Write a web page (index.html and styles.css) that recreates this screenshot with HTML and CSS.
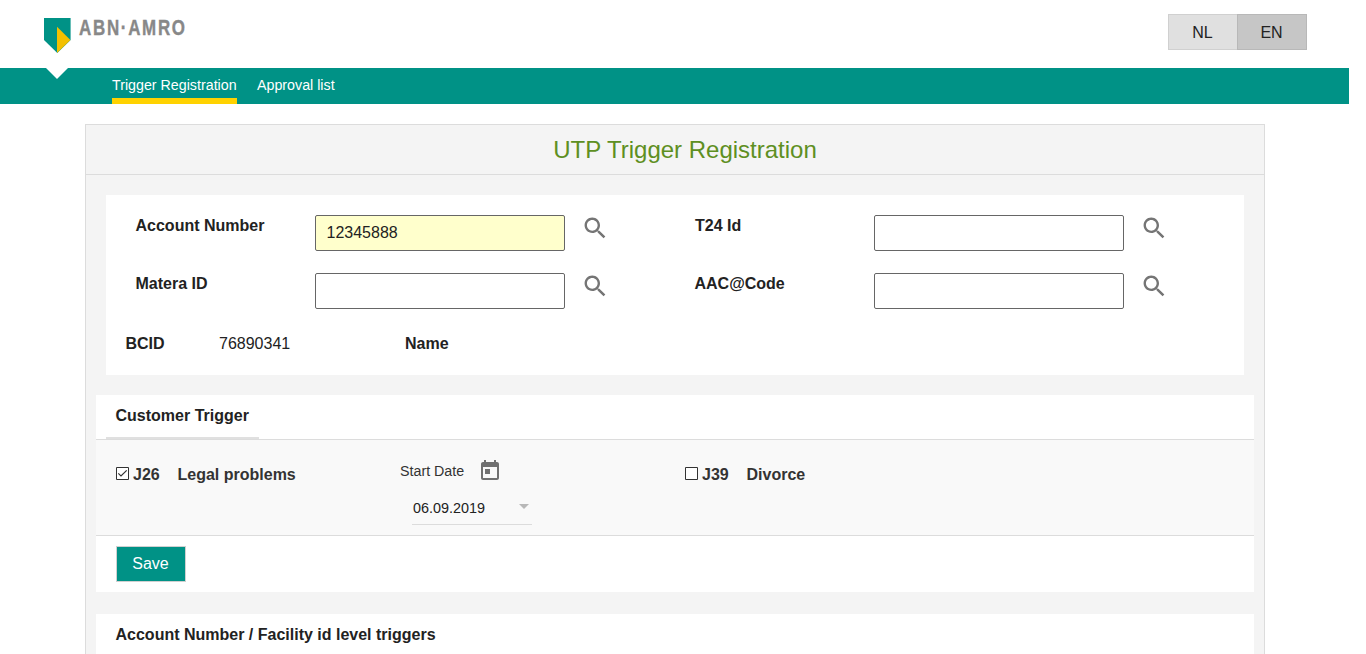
FILE: index.html
```html
<!DOCTYPE html>
<html lang="en">
<head>
<meta charset="utf-8">
<title>UTP Trigger Registration</title>
<link rel="stylesheet" href="styles.css">
</head>
<body>
<svg class="defs" width="0" height="0" aria-hidden="true">
  <symbol id="search" viewBox="0 0 24 24"><path d="M15.5 14h-.79l-.28-.27C15.41 12.59 16 11.11 16 9.5 16 5.91 13.09 3 9.5 3S3 5.91 3 9.5 5.91 16 9.5 16c1.61 0 3.09-.59 4.23-1.57l.27.28v.79l5 4.99L20.49 19l-4.99-5zm-6 0C7.01 14 5 11.99 5 9.5S7.01 5 9.5 5 14 7.01 14 9.5 11.99 14 9.5 14z"/></symbol>
</svg>
<div class="page">
  <header class="top">
    <svg class="logo" width="160" height="40" viewBox="0 0 160 40" role="img" aria-label="ABN AMRO">
      <path fill="#009286" d="M0 0h26.600v22L13.300 35 0 22z"/>
      <path fill="#f3c000" d="M13 8.800L26.400 22 13 35z"/>
      <text class="logo-text" transform="translate(35 17.200) scale(.787 1)">ABN·AMRO</text>
    </svg>
    <div class="langs">
      <button class="lang">NL</button>
      <button class="lang lang-on">EN</button>
    </div>
  </header>
  <nav class="nav">
    <span class="notch"></span>
    <a class="nav-link nav-on">Trigger Registration</a>
    <a class="nav-link">Approval list</a>
  </nav>
  <main class="panel">
    <h1 class="title">UTP Trigger Registration</h1>
    <section class="search">
      <div class="fields">
        <label class="label">Account Number</label>
        <input class="input filled" value="12345888">
        <svg class="icon"><use href="#search"/></svg>
        <label class="label second">T24 Id</label>
        <input class="input">
        <svg class="icon"><use href="#search"/></svg>
        <label class="label">Matera ID</label>
        <input class="input">
        <svg class="icon"><use href="#search"/></svg>
        <label class="label">AAC@Code</label>
        <input class="input">
        <svg class="icon"><use href="#search"/></svg>
      </div>
      <div class="info"><b class="bcid">BCID</b><span class="number">76890341</span><b>Name</b></div>
    </section>
    <section class="card">
      <div class="tabs"><h2 class="tab">Customer Trigger</h2></div>
      <div class="triggers">
        <div class="trigger legal">
          <svg class="check" width="13" height="13" viewBox="0 0 13 13"><path class="box" d="M.5.5h12v12H.5z"/><path class="tick" d="M2.300 6.300l2.700 2.700 5.700-5.700"/></svg>
          <span class="code">J26</span><span>Legal problems</span>
        </div>
        <div class="date">
          <div class="date-head">Start Date
            <svg class="calendar" width="24" height="24" viewBox="0 0 24 24"><path d="M19 3h-1V1h-2v2H8V1H6v2H5c-1.110 0-1.990.9-1.990 2L3 19c0 1.100.89 2 2 2h14c1.100 0 2-.9 2-2V5c0-1.100-.9-2-2-2zm0 16H5V8h14v11zM7 10h5v5H7z"/></svg>
          </div>
          <div class="date-value">06.09.2019<svg class="arrow" width="10" height="5" viewBox="0 0 10 5"><path fill="#b8b8b8" d="M0 0h10L5 5z"/></svg></div>
        </div>
        <div class="trigger">
          <svg class="check" width="13" height="13" viewBox="0 0 13 13"><path class="box" d="M.5.5h12v12H.5z"/></svg>
          <span class="code">J39</span><span>Divorce</span>
        </div>
      </div>
      <div class="actions"><button class="save">Save</button></div>
    </section>
    <section class="card facility"><h2 class="heading">Account Number / Facility id level triggers</h2></section>
  </main>
</div>
</body>
</html>
```
FILE: styles.css
```css
* { box-sizing: border-box; }
html { height: 100%; overflow: hidden; }
body { margin: 0; height: 654px; overflow: hidden; background: #fff; color: #222; font: 16px/20px "Liberation Sans", Arial, sans-serif; }
.defs { position: absolute; }
.page { width: 1349px; }
.top { display: flex; justify-content: space-between; height: 68px; padding: 14px 42px 0 44px; }
.logo { margin-top: 4px; overflow: visible; }
.logo-text { font: bold 21.500px "Liberation Sans", Arial, sans-serif; letter-spacing: 2.200px; fill: #888; stroke: #888; stroke-width: .4; }
.langs { display: flex; }
.lang { width: 69px; height: 36px; padding: 1px 1px 0 0; border: 1px solid #d0d0d0; border-right: 0; background: #e0e0e0; color: #222; font: inherit; }
.lang-on { width: 70px; border: 1px solid #b8b8b8; background: #c6c6c6; }
.nav { display: flex; gap: 20px; height: 36px; padding-left: 46px; background: #009286; }
.notch { width: 22px; height: 11px; margin-right: 24px; background: #fff; clip-path: polygon(0 0, 100% 0, 50% 100%); }
.nav-link { height: 36px; padding-top: 7px; color: #fff; font-size: 14.250px; white-space: nowrap; }
.nav-on { width: 125px; border-bottom: 6px solid #ffd200; }
.panel { width: 1180px; height: 540px; margin: 20px 0 0 85px; border: 1px solid #dcdcdc; background: #f4f4f4; }
.title { height: 50px; margin: 0; padding-left: 20px; border-bottom: 1px solid #dcdcdc; color: #5e8f22; font-size: 24px; font-weight: 400; line-height: 49px; text-align: center; }
.search { height: 180px; margin: 20px 20px 0; padding: 20px 19px 0; background: #fff; }
.fields { display: grid; grid-template-columns: 180px 250px 129px 180px 250px 60px; grid-auto-rows: 58px; padding-left: 10px; }
.label { padding: 1px 0 0 .5px; font-weight: 700; }
.second { padding-left: 1px; }
.input { width: 250px; height: 36px; padding: 0 10.500px; border: 1px solid #666; border-radius: 2px; background: #fff; color: #222; font: inherit; }
.filled { background: #ffffcc; }
.icon { width: 28.500px; height: 28.500px; margin: -1.300px 0 0 15.500px; fill: #757575; }
.info { display: flex; margin-top: 3px; }
.bcid { width: 94px; padding-left: .5px; }
.number { width: 186px; }
.card { margin: 20px 10px 0; background: #fff; }
.tabs { height: 45px; padding-left: 10px; border-bottom: 1px solid #dcdcdc; }
.tab { width: 153px; height: 44px; margin: 0; padding: 11px 0 0 9.500px; border-bottom: 2px solid #e0e0e0; font-size: 16px; line-height: 20px; white-space: nowrap; }
.triggers { display: flex; height: 96px; padding: 19px 20px 0; border-bottom: 1px solid #dcdcdc; background: #f9f9f9; color: #333; }
.trigger { display: flex; height: 30px; padding-top: 6px; font-weight: 700; }
.legal { width: 284px; }
.check { margin: 2px 4px 0 0; }
.box { fill: #fff; stroke: #333; }
.tick { fill: none; stroke: #333; stroke-width: 1.200; }
.code { width: 44.500px; }
.date { width: 285px; color: #222; font-size: 14.400px; }
.date-head { display: flex; align-items: center; height: 24px; color: #333; font-size: 14.250px; }
.calendar { margin-left: 14px; fill: #707070; }
.date-value { display: flex; align-items: center; justify-content: space-between; width: 120px; height: 33px; margin: 9px 0 0 12px; padding: 0 3px 0 1px; border-bottom: 1px solid #dcdcdc; }
.arrow { margin-bottom: 4px; }
.actions { height: 56px; padding: 10px 20px; }
.save { width: 70px; height: 36px; padding: 0 1px 1px 0; border: 1px solid #d0d0d0; background: #009286; color: #fff; font: inherit; }
.facility { height: 60px; margin-top: 22px; padding: 11px 19.500px; }
.heading { margin: 0; font-size: 16px; line-height: 20px; }
```
